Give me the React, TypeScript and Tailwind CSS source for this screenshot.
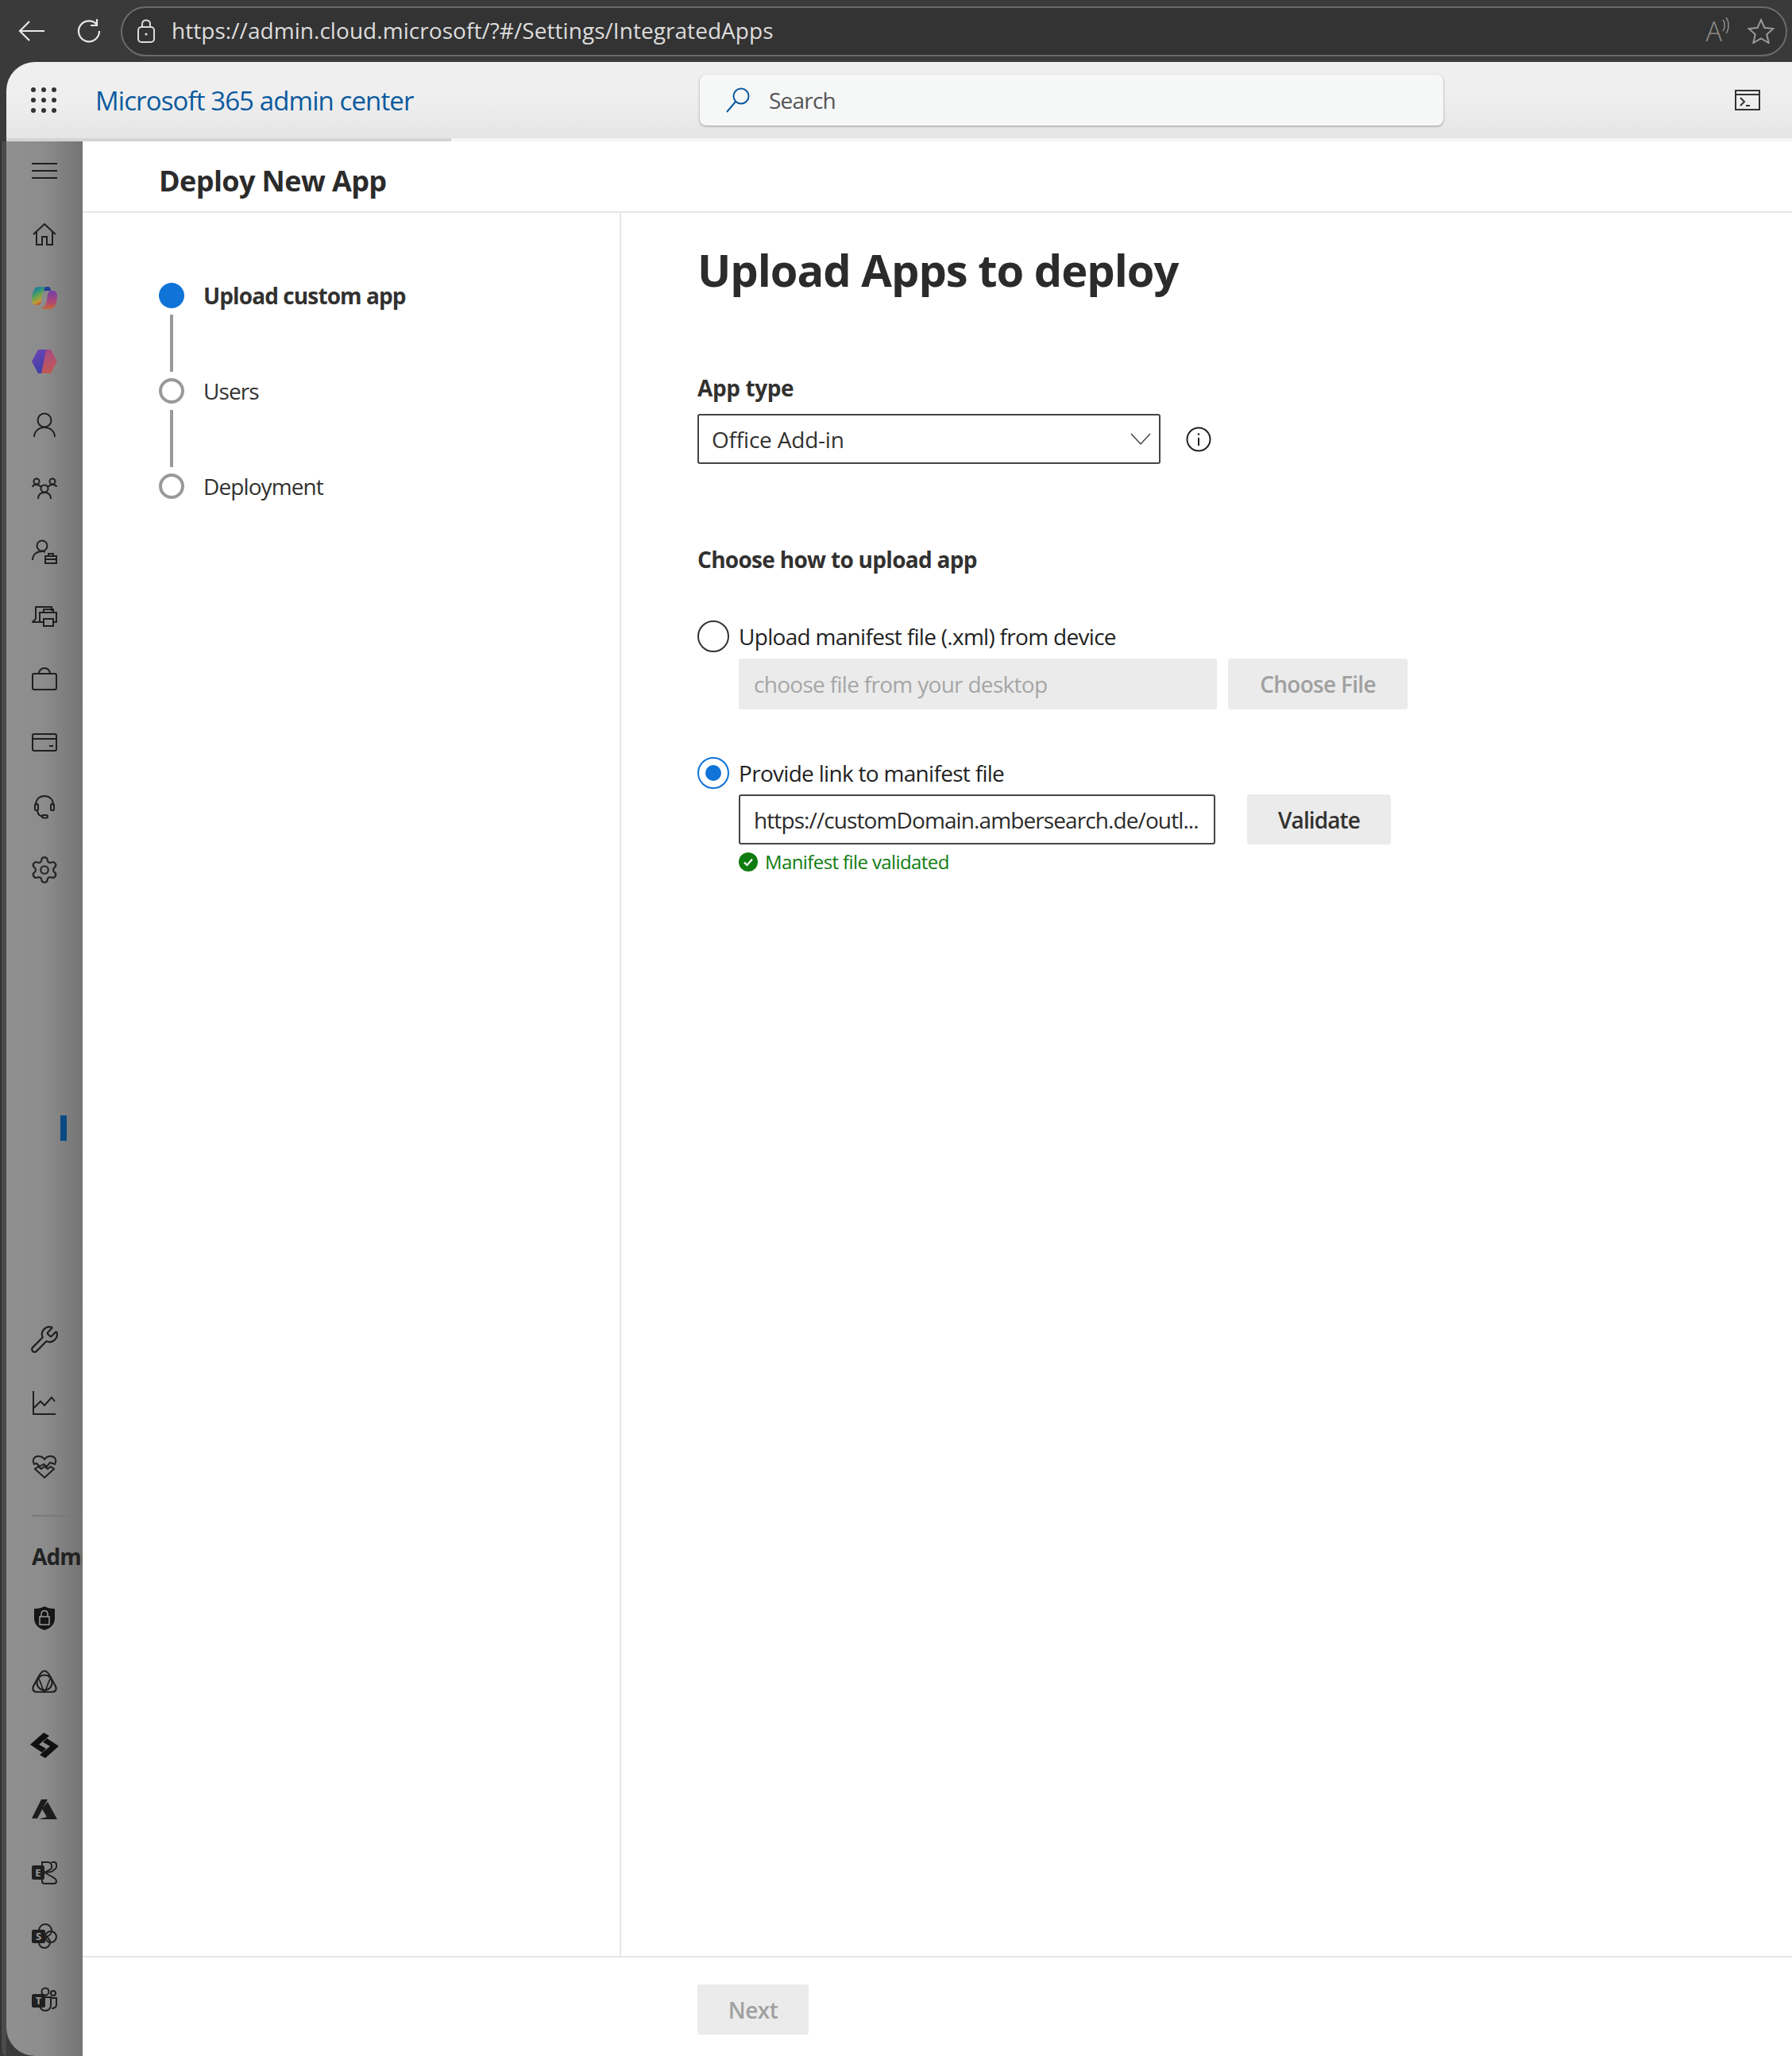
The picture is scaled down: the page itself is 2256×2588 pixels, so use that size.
import { Settings, Wrench } from "lucide-react";
import type { ReactNode } from "react";

function Ico({ children, size = 32 }: { children: ReactNode; size?: number }) {
  return (
    <svg width={size} height={size} viewBox="0 0 32 32" fill="none" stroke="#1f1f1f" strokeWidth="2">
      {children}
    </svg>
  );
}

const topIcons: ReactNode[] = [
  <Ico key="home">
    <path d="M2 16 16 3l14 13" />
    <path d="M6 13v16h7V19h6v10h7V13" />
  </Ico>,
  <svg key="copilot" width="32" height="30" viewBox="0 0 32 30">
    <defs>
      <linearGradient id="cpa" x1="0" y1="0" x2="0.5" y2="1">
        <stop offset="0" stopColor="#176a9c" />
        <stop offset="0.3" stopColor="#2a8f8a" />
        <stop offset="0.55" stopColor="#6ba44f" />
        <stop offset="0.8" stopColor="#c29a35" />
        <stop offset="1" stopColor="#c0482a" />
      </linearGradient>
      <linearGradient id="cpb" x1="0.5" y1="0" x2="0.5" y2="1">
        <stop offset="0" stopColor="#7440a8" />
        <stop offset="0.6" stopColor="#ae4575" />
        <stop offset="1" stopColor="#c66a38" />
      </linearGradient>
    </defs>
    <path d="M8 1h12l-4 4c-3 3-3 8-4 14-.5 3-2 5-4 5H5c-3 0-5-3-5-6 0-8 3-17 8-17Z" fill="url(#cpa)" />
    <path d="M24 29H12l4-4c3-3 3-8 4-14 .5-3 2-5 4-5h3c3 0 5 3 5 6 0 8-3 17-8 17Z" fill="url(#cpb)" />
    <path d="M17 1h4c2 0 3 2 3 5h-5c-2 0-3 1-4-1Z" fill="#263f93" />
  </svg>,
  <svg key="hex" width="34" height="32" viewBox="0 0 34 32">
    <defs>
      <linearGradient id="hxa" x1="0" y1="0" x2="0.4" y2="1">
        <stop offset="0" stopColor="#7044b5" />
        <stop offset="1" stopColor="#3f3fa8" />
      </linearGradient>
      <linearGradient id="hxb" x1="0.5" y1="0" x2="0.7" y2="1">
        <stop offset="0" stopColor="#a84a86" />
        <stop offset="1" stopColor="#c25a4f" />
      </linearGradient>
    </defs>
    <path d="M9 1h11l-6 30H9L1 16Z" fill="url(#hxa)" />
    <path d="M19 1h6l8 15-8 15H13Z" fill="url(#hxb)" />
  </svg>,
  <Ico key="user">
    <circle cx="16" cy="10" r="8.5" />
    <path d="M3 31c0-7 6-12 13-12s13 5 13 12" />
  </Ico>,
  <Ico key="groups">
    <circle cx="6" cy="7" r="3.5" />
    <circle cx="26" cy="7" r="3.5" />
    <circle cx="16" cy="16" r="4.5" />
    <path d="M1 14c0-2 2-3 5-3s5 2 6 3M31 14c0-2-2-3-5-3s-5 2-6 3M8 29c0-5 3-8 8-8s8 3 8 8" />
  </Ico>,
  <Ico key="roles">
    <circle cx="13" cy="8" r="6.5" />
    <path d="M1 26c0-7 5-11 12-11 2 0 3 .3 4 .8" />
    <rect x="17" y="21" width="14" height="9" />
    <path d="M17 25h14M21 21v-3h6v3" />
  </Ico>,
  <Ico key="devices">
    <path d="M5 20V5h20v5M5 20l-4 4h11" />
    <rect x="10" y="12" width="21" height="12" />
    <rect x="15" y="8" width="12" height="4" />
    <rect x="15" y="20" width="12" height="9" fill="#8c8c8c" />
  </Ico>,
  <Ico key="bag">
    <rect x="1" y="9" width="30" height="20" rx="2" />
    <path d="M9 9c0-4 3-7 7-7s7 3 7 7" />
  </Ico>,
  <Ico key="card">
    <rect x="1" y="5" width="30" height="21" rx="2" />
    <path d="M1 11h30M22 20h5" />
  </Ico>,
  <Ico key="support">
    <path d="M5 15V14C5 7 10 3 16 3s11 4 11 11v1" />
    <rect x="4" y="13" width="4" height="8" rx="1.5" />
    <rect x="24" y="13" width="4" height="8" rx="1.5" />
    <path d="M7 21c0 5 3 7 7 8" />
    <rect x="13" y="27" width="7" height="3.5" rx="1.7" />
  </Ico>,
  <Settings key="gear" size={38} strokeWidth={1.4} color="#262626" />,
];

const bottomIcons: ReactNode[] = [
  <Ico key="triangle" size={34}>
    <path d="M16 3c3 0 5 3 7 7l6 11c2 4 0 7-4 7H7c-4 0-6-3-4-7l6-11c2-4 4-7 7-7Z" />
    <circle cx="16" cy="17" r="9" />
    <path d="M9 12c3 5 4 12 7 16 3-4 4-11 7-16" strokeWidth="1.6" />
  </Ico>,
  <svg key="purview" width="36" height="32" viewBox="0 0 36 32" fill="#101010">
    <path d="M17 0 24 4 11 15l9 5-5 5L0 15Z" />
    <path d="M19 32l-7-4 13-11-9-5 5-5 15 10Z" />
  </svg>,
  <svg key="azure" width="32" height="27" viewBox="0 0 32 27" fill="#1c1c1c">
    <path d="M12 1h8L7 25H0Z" />
    <path d="M20 4 32 26H9l10-3-6-10Z" />
  </svg>,
  <Ico key="exchange">
    <path d="M13 8V3h7c3 0 5 2 5 5v3l-9 5-3-2" />
    <path d="M25 3h3c2 0 3 1 3 3v3c0 2-3 4-6 6l-9 1 9 5c3 2 6 3 6 6 0 2-1 3-3 3H16c-2 0-3-1-3-3v-3" />
    <rect x="1" y="8" width="14" height="16" rx="1.5" fill="#1f1f1f" />
    <text x="8" y="21" textAnchor="middle" fontSize="13" fontWeight="700" fill="#9a9a9a" stroke="none" fontFamily="'Open Sans', sans-serif">E</text>
  </Ico>,
  <Ico key="sharepoint">
    <circle cx="17" cy="9" r="8" />
    <circle cx="24" cy="17" r="7" />
    <circle cx="16" cy="24" r="7" />
    <rect x="1" y="9" width="15" height="15" rx="1.5" fill="#1f1f1f" />
    <text x="8.5" y="21" textAnchor="middle" fontSize="13" fontWeight="700" fill="#9a9a9a" stroke="none" fontFamily="'Open Sans', sans-serif">S</text>
  </Ico>,
  <Ico key="teams">
    <circle cx="17" cy="6" r="4.5" />
    <circle cx="27" cy="8" r="3" />
    <path d="M10 13h14v10c0 4-3 7-7 7s-7-3-7-7ZM25 14h6v8c0 3-2 5-6 5" />
    <rect x="1" y="10" width="15" height="15" rx="1.5" fill="#1f1f1f" />
    <text x="8.5" y="22" textAnchor="middle" fontSize="13" fontWeight="700" fill="#9a9a9a" stroke="none" fontFamily="'Open Sans', sans-serif">T</text>
  </Ico>,
];

function NavItem({ children }: { children: ReactNode }) {
  return <div className="h-[80px] w-[96px] flex items-center justify-center">{children}</div>;
}

function Sidebar() {
  return (
    <aside className="w-[96px] rounded-bl-[36px] bg-linear-to-r from-[#909090] via-[#8c8c8c] to-[#747474] flex flex-col overflow-hidden">
      <div className="h-[74px] mb-[3px] flex items-center justify-center">
        <div className="w-[32px] flex flex-col gap-[7px]">
          <div className="h-[2px] bg-[#1f1f1f]" />
          <div className="h-[2px] bg-[#1f1f1f]" />
          <div className="h-[2px] bg-[#1f1f1f]" />
        </div>
      </div>
      {topIcons.map((icon, i) => (
        <NavItem key={i}>{icon}</NavItem>
      ))}
      <div className="ml-[68px] mt-[269px] h-[32px] w-[8px] bg-[#0b4a85]" />
      <div className="mt-[210px]" />
      <NavItem>
        <Wrench size={38} strokeWidth={1.4} color="#1f1f1f" />
      </NavItem>
      <NavItem>
        <Ico>
          <path d="M2 1v29h28" />
          <path d="M3 22l8-8 5 5 9-10 4 5" />
        </Ico>
      </NavItem>
      <NavItem>
        <Ico>
          <path d="M3 13C0 8 3 3 8 3c3 0 6 1 8 4 2-3 5-4 8-4 5 0 8 5 5 10l-6-2-4 5-4-3-5 3-4-4Z" />
          <path d="M4 19l4-3 4 3 4-3 4 3 4-3 4 3-12 11Z" />
        </Ico>
      </NavItem>
      <div className="ml-[32px] mt-[21px] h-[2px] bg-[#7a7a7a] shrink-0" />
      <div className="ml-[32px] h-[88px] pt-[12px] flex items-center shrink-0 text-[28px] font-bold text-[#222] tracking-[-0.9px] whitespace-nowrap">
        Admin centers
      </div>
      <NavItem>
        <svg width="28" height="32" viewBox="0 0 28 32">
          <path d="M14 1c3 2 8 3 13 3v12c0 8-6 13-13 15C7 29 1 24 1 16V4c5 0 10-1 13-3Z" fill="#151515" />
          <rect x="8" y="14" width="12" height="10" fill="none" stroke="#9a9a9a" strokeWidth="1.5" />
          <path d="M10 14v-3c0-6 8-6 8 0v3" fill="none" stroke="#9a9a9a" strokeWidth="1.5" />
        </svg>
      </NavItem>
      {bottomIcons.map((icon, i) => (
        <NavItem key={i}>{icon}</NavItem>
      ))}
    </aside>
  );
}

function Step({ label, active, last }: { label: string; active?: boolean; last?: boolean }) {
  return (
    <div className="flex">
      <div className="w-[32px] flex flex-col items-center">
        {active ? (
          <div className="w-[32px] h-[32px] rounded-full bg-[#0f73d8]" />
        ) : (
          <div className="w-[32px] h-[32px] rounded-full border-[4px] border-[#999]" />
        )}
        {!last && <div className="w-[4px] h-[72px] my-[8px] bg-[#999]" />}
      </div>
      <div className={"ml-[24px] h-[32px] flex items-center text-[28px] tracking-[-0.9px] text-[#323130] " + (active ? "font-bold" : "")}>
        {label}
      </div>
    </div>
  );
}

function Radio({ checked }: { checked?: boolean }) {
  return checked ? (
    <div className="w-[40px] h-[40px] rounded-full border-[2px] border-[#0f73d8] flex items-center justify-center">
      <div className="w-[20px] h-[20px] rounded-full bg-[#0f73d8]" />
    </div>
  ) : (
    <div className="w-[40px] h-[40px] rounded-full border-[2px] border-[#333] bg-white" />
  );
}

export default function App() {
  return (
    <div className="w-[2256px] h-[2588px] bg-[#3a3a3a] flex flex-col overflow-hidden font-['Open_Sans',sans-serif] text-[#323130]">
      {/* browser chrome */}
      <div className="h-[78px] shrink-0 flex items-center pl-[22px] pr-[6px]">
        <svg width="36" height="28" viewBox="0 0 36 28" fill="none" stroke="#e8e8e8" strokeWidth="2.2">
          <path d="M34 14H3M15 2 3 14l12 12" />
        </svg>
        <svg className="ml-[37px]" width="32" height="32" viewBox="0 0 32 32" fill="none" stroke="#e8e8e8" strokeWidth="2.2">
          <path d="M27 8a13 13 0 1 0 3 8" />
          <path d="M27 1v8h-8" />
        </svg>
        <div className="ml-[25px] flex-1 h-[63px] rounded-full border-[2px] border-[#6b6b6b] bg-[#333] flex items-center pl-[18px] pr-[14px]">
          <svg width="24" height="32" viewBox="0 0 24 32" fill="none" stroke="#dcdcdc" strokeWidth="2">
            <rect x="2" y="11" width="20" height="19" rx="4" />
            <path d="M7 11V7c0-6 10-6 10 0v4" />
            <circle cx="12" cy="20" r="1.6" fill="#dcdcdc" stroke="none" />
          </svg>
          <span className="ml-[20px] mb-[3px] text-[28px] text-[#dddddd] tracking-[0.05px]">https://admin.cloud.microsoft/?#/Settings/IntegratedApps</span>
          <div className="ml-auto flex items-center">
            <span className="text-[34px] leading-none font-light text-[#8e8e8e]">A</span>
            <svg className="mb-[14px]" width="10" height="22" viewBox="0 0 10 22" fill="none" stroke="#8e8e8e" strokeWidth="1.5">
              <path d="M1 4c3 3 3 10 0 14M5 1c4 5 4 15 0 20" />
            </svg>
            <svg className="ml-[22px]" width="34" height="32" viewBox="0 0 34 32" fill="none" stroke="#9a9a9a" strokeWidth="2">
              <path d="M17 2l4.5 10 11 1-8.300 7.300 2.500 10.700L17 25.500 7.300 31l2.500-10.700L1.500 13l11-1Z" />
            </svg>
          </div>
        </div>
      </div>

      {/* admin header */}
      <header className="ml-[8px] h-[100px] shrink-0 rounded-tl-[36px] bg-linear-to-b from-[#f0f0f0] via-[#eeeeee] to-[#e4e4e4] flex flex-col overflow-hidden">
        <div className="h-[96px] flex items-center">
          <div className="ml-[31px] grid grid-cols-3 gap-[7px]">
            {Array.from({ length: 9 }).map((_, i) => (
              <div key={i} className="w-[6px] h-[6px] rounded-full bg-[#333]" />
            ))}
          </div>
          <div className="ml-[49px] w-[761px] text-[33px] leading-none text-[#0b5a9e] tracking-[-0.9px]">Microsoft 365 admin center</div>
          <div className="w-[936px] h-[64px] rounded-[8px] bg-[#f6f7f7] shadow-[0_1px_3px_rgba(0,0,0,0.35)] flex items-center pl-[32px]">
            <svg width="32" height="32" viewBox="0 0 32 32" fill="none" stroke="#0b5a9e" strokeWidth="2">
              <circle cx="20" cy="11" r="9.500" />
              <path d="M13 18 2 31" />
            </svg>
            <span className="ml-[23px] text-[28px] text-[#555] tracking-[-0.8px]">Search</span>
          </div>
          <svg className="ml-[367px]" width="32" height="26" viewBox="0 0 32 26" fill="none" stroke="#333" strokeWidth="2">
            <rect x="1" y="1" width="30" height="24" />
            <path d="M1 6h30M7 10l5 5-5 5M14 20h5" />
          </svg>
        </div>
        <div className="h-[4px] flex">
          <div className="w-[560px] bg-[#d4d4d4]" />
          <div className="flex-1 bg-[#f5f5f5]" />
        </div>
      </header>

      <div className="flex-1 flex min-h-0">
        <div className="w-[8px] rounded-bl-[30px] border-l-[2px] border-[#333] bg-[#4a4a4a]" />
        <Sidebar />
        <main className="flex-1 bg-white flex flex-col min-w-0 tracking-[-0.7px]">
          <div className="h-[90px] shrink-0 pl-[96px] pt-[12px] flex items-center border-b-[2px] border-[#e6e6e6] text-[36px] font-bold tracking-[-0.6px] text-[#2b2b2b]">
            Deploy New App
          </div>
          <div className="flex-1 flex min-h-0">
            <div className="w-[678px] border-r-[2px] border-[#e6e6e6] pl-[96px] pt-[88px]">
              <Step label="Upload custom app" active />
              <Step label="Users" />
              <Step label="Deployment" last />
            </div>
            <div className="flex-1 pl-[96px] pt-[33px]">
              <h1 className="text-[56px] leading-[76px] font-bold tracking-[-1px] text-[#2b2b2b]">Upload Apps to deploy</h1>
              <div className="mt-[93px] text-[28px] leading-[36px] font-bold tracking-[-0.4px] text-[#323130]">App type</div>
              <div className="mt-[15px] flex items-center">
                <div className="w-[583px] h-[63px] rounded-[3px] border-[2px] border-[#444] flex items-center justify-between pl-[16px] pr-[10px] text-[28px] tracking-[-0.2px]">
                  <span>Office Add-in</span>
                  <svg width="26" height="16" viewBox="0 0 26 16" fill="none" stroke="#444" strokeWidth="1.5">
                    <path d="M1 1l12 13L25 1" />
                  </svg>
                </div>
                <svg className="ml-[32px]" width="32" height="32" viewBox="0 0 32 32" fill="none" stroke="#222" strokeWidth="2">
                  <circle cx="16" cy="16" r="14.500" />
                  <path d="M16 14v10" />
                  <circle cx="16" cy="9.500" r="1.300" fill="#222" stroke="none" />
                </svg>
              </div>
              <div className="mt-[102px] text-[28px] leading-[36px] font-bold tracking-[-0.7px] text-[#323130]">Choose how to upload app</div>
              <div className="mt-[58px] flex items-center">
                <Radio />
                <span className="ml-[12px] text-[28px] text-[#222]">Upload manifest file (.xml) from device</span>
              </div>
              <div className="mt-[7px] ml-[52px] flex gap-[14px]">
                <div className="w-[602px] h-[64px] rounded-[3px] bg-[#ebebeb] flex items-center pl-[19px] text-[28px] text-[#a6a6a6]">choose file from your desktop</div>
                <div className="w-[226px] h-[64px] rounded-[3px] bg-[#ebebeb] flex items-center justify-center text-[28px] font-semibold text-[#a0a0a0]">Choose File</div>
              </div>
              <div className="mt-[59px] flex items-center">
                <Radio checked />
                <span className="ml-[12px] text-[28px] text-[#222]">Provide link to manifest file</span>
              </div>
              <div className="mt-[6px] ml-[52px] flex gap-[40px]">
                <div className="w-[600px] h-[63px] rounded-[3px] border-[2px] border-[#444] flex items-center pl-[17px] text-[28px] tracking-[-0.9px] text-[#2b2b2b] whitespace-nowrap">
                  https://customDomain.ambersearch.de/outl...
                </div>
                <div className="w-[181px] h-[63px] rounded-[3px] bg-[#ebebeb] flex items-center justify-center text-[28px] font-semibold tracking-[-0.9px] text-[#323130]">Validate</div>
              </div>
              <div className="mt-[4px] ml-[52px] flex items-center">
                <svg width="24" height="24" viewBox="0 0 24 24">
                  <circle cx="12" cy="12" r="12" fill="#107c10" />
                  <path d="M7 12.500l3.500 3.500 6.500-7.500" fill="none" stroke="#fff" strokeWidth="2.200" />
                </svg>
                <span className="ml-[9px] text-[24px] tracking-[-0.6px] text-[#107c10]">Manifest file validated</span>
              </div>
            </div>
          </div>
          <div className="h-[126px] shrink-0 border-t-[2px] border-[#e6e6e6] pl-[774px] pt-[34px]">
            <div className="w-[140px] h-[63px] rounded-[3px] bg-[#ebebeb] flex items-center justify-center text-[28px] font-semibold tracking-[-0.5px] text-[#a0a0a0]">Next</div>
          </div>
        </main>
      </div>
    </div>
  );
}
